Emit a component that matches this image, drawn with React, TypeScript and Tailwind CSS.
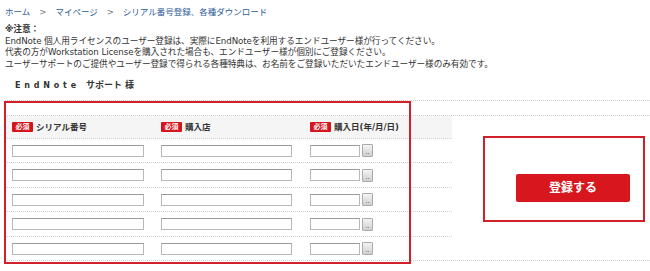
import React from "react";

const rowHeights = ["h-[24px]", "h-[25px]", "h-[24px]", "h-[25px]", "h-[23px]"];

function Badge() {
  return (
    <span className="inline-flex items-center justify-center w-[21px] h-[10px] bg-[#d7141c] text-white text-[7px] font-bold leading-none rounded-[1px] mr-[3px]">
      必須
    </span>
  );
}

function Field({ w }: { w: string }) {
  return <div className={`${w} h-[12px] bg-white border border-[#b8b8b8] border-t-[#9a9a9a]`} />;
}

export default function App() {
  return (
    <div
      className="relative w-[650px] h-[271px] bg-white overflow-hidden text-[#333]"
      style={{ fontFamily: '"DejaVu Sans", "Noto Sans CJK JP", sans-serif' }}
    >
      {/* breadcrumb */}
      <div className="pt-[6px] pl-[5px] text-[8.5px] leading-[12px] text-[#2d5b9a] flex items-center">
        <span>ホーム</span>
        <span className="mx-[9px] text-[#777]">&gt;</span>
        <span>マイページ</span>
        <span className="mx-[9px] text-[#777]">&gt;</span>
        <span>シリアル番号登録、各種ダウンロード</span>
      </div>

      {/* notes */}
      <div className="mt-[6px] pl-[5px] text-[8.7px] leading-[11.5px] tracking-[-0.1px]">
        <div className="font-bold">※注意：</div>
        <div>EndNote 個人用ライセンスのユーザー登録は、実際にEndNoteを利用するエンドユーザー様が行ってください。</div>
        <div>代表の方がWorkstation Licenseを購入された場合も、エンドユーザー様が個別にご登録ください。</div>
        <div>ユーザーサポートのご提供やユーザー登録で得られる各種特典は、お名前をご登録いただいたエンドユーザー様のみ有効です。</div>
      </div>

      {/* heading */}
      <div className="ml-[5px] h-[31px] border-b border-dotted border-[#cfcfcf] flex items-center pl-[10px] pt-[1px] font-bold">
        <span className="text-[8px] tracking-[3.8px]">EndNote</span>
        <span className="ml-[6px] text-[9px]">サポート</span>
        <span className="ml-[3px] text-[9px]">様</span>
      </div>

      {/* form area */}
      <div className="mt-[14px] ml-[5px] flex border-t border-b border-dotted border-[#cfcfcf]">
        <div className="w-[447px]">
          {/* header */}
          <div className="h-[23px] bg-[#f5f5f5] grid grid-cols-[149px_149px_149px] items-center border-b border-dotted border-[#cfcfcf] text-[8.5px] font-bold">
            <div className="pl-[7px] flex items-center">
              <Badge />
              <span>シリアル番号</span>
            </div>
            <div className="pl-[7px] flex items-center">
              <Badge />
              <span>購入店</span>
            </div>
            <div className="pl-[7px] flex items-center">
              <Badge />
              <span>購入日(年/月/日)</span>
            </div>
          </div>
          {rowHeights.map((h, i) => (
            <div
              key={i}
              className={`${h} grid grid-cols-[149px_149px_149px] items-center ${
                i < 4 ? "border-b border-dotted border-[#cfcfcf]" : ""
              }`}
            >
              <div className="pl-[7px]">
                <Field w="w-[132px]" />
              </div>
              <div className="pl-[7px]">
                <Field w="w-[131px]" />
              </div>
              <div className="pl-[7px] flex items-center">
                <Field w="w-[50px]" />
                <div className="ml-[2px] w-[11px] h-[13px] border border-[#aaa] rounded-[1px] bg-gradient-to-b from-[#f4f4f4] to-[#cfcfcf] flex items-end justify-center text-[6px] leading-[8px] text-[#333]">
                  ..
                </div>
              </div>
            </div>
          ))}
        </div>
        <div className="flex-1 flex items-center pl-[64px]">
          <button className="w-[114px] h-[28px] bg-[#d7161d] rounded-[2px] text-white text-[12px] font-bold flex items-center justify-center">
            登録する
          </button>
        </div>
      </div>

      {/* annotation boxes */}
      <div className="absolute left-[4px] top-[101px] w-[407px] h-[163px] border-2 border-[#d2202a] pointer-events-none" />
      <div className="absolute left-[483px] top-[136px] w-[162px] h-[86px] border-2 border-[#d2202a] pointer-events-none" />
    </div>
  );
}
